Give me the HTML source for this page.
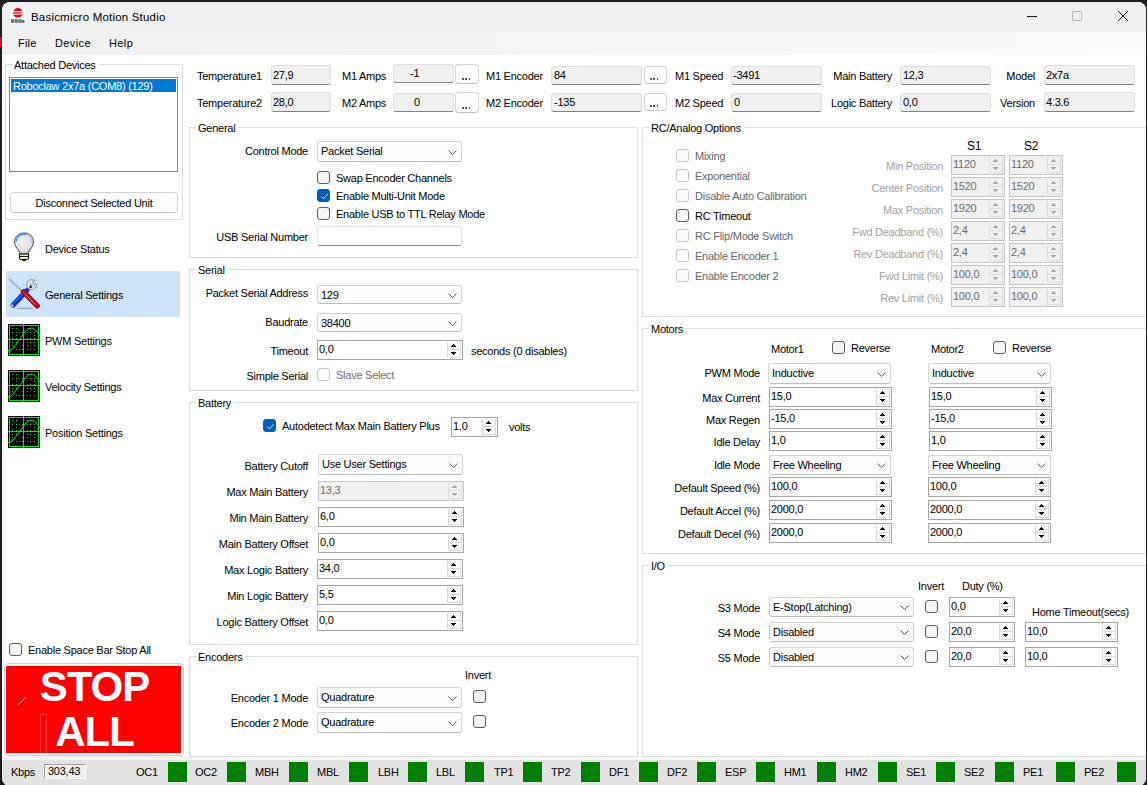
<!DOCTYPE html><html><head><meta charset="utf-8"><style>
*{margin:0;padding:0}
html,body{width:1147px;height:785px;overflow:hidden;background:#1e1f22}
body{position:relative;font-family:"Liberation Sans",sans-serif;font-size:11px;color:#000}
.t{position:absolute;font-size:11px;line-height:13px;letter-spacing:-0.25px;white-space:nowrap}
.ro{position:absolute;box-sizing:border-box;background:#f0f0f0;border:1px solid #dedede;border-bottom:1px solid #848484;border-radius:3px}
.btn{position:absolute;box-sizing:border-box;background:#fdfdfd;border:1px solid #d4d4d4;border-bottom-color:#c2c2c2;border-radius:4px}
.dots{position:absolute;width:9px;height:2px;background:repeating-linear-gradient(90deg,#555 0 1.6px,transparent 1.6px 3.4px)}
.cb{position:absolute;box-sizing:border-box;background:#fdfdfd;border:1px solid #d3d3d3;border-bottom-color:#bcbcbc;border-radius:3px}
.num{position:absolute;box-sizing:border-box;background:#fff;border:1px solid #a4a6ab}
.num.dis{background:#f0f0f0;border-color:#c4c4c4}
.sp{position:absolute;width:14px;box-sizing:border-box;border:1px solid #d9d9d9;border-top:none;background:#fbfbfb}
.num.dis .sp{background:#f0f0f0;border-color:#dedede}
.ck{position:absolute;width:13px;height:13px;box-sizing:border-box;border:1px solid #5d5d5d;border-radius:3px;background:#f4f4f4}
.ck.on{background:#005fb8;border-color:#005fb8}
.ck.dis{border-color:#c6c6c6;background:#fbfbfb}
.gb{position:absolute;box-sizing:border-box;border:1px solid #dcdcdc}
</style></head><body><div id="win" style="position:absolute;left:2px;top:2px;width:1144px;height:784px;background:#fff;border-radius:8px;overflow:hidden"></div>
<div style="position:absolute;left:2px;top:2px;width:1144px;height:30px;box-sizing:border-box;background:#eff0f2;border-radius:8px 8px 0 0"></div>
<div style="position:absolute;left:2px;top:32px;width:1144px;height:23px;box-sizing:border-box;background:linear-gradient(90deg,#f0f0f0,#fbfbfb)"></div>
<svg style="position:absolute;left:10px;top:8px" width="16" height="16" viewBox="0 0 16 16"><rect width="16" height="16" fill="#fff"/><circle cx="7.9" cy="4.9" r="4.9" fill="#dc0a1e"/><path d="M3 3.1 H11 A1.2 1.2 0 0 1 11 6.8 H3 V5.7 H10.6 A0.4 0.4 0 0 0 10.6 4.2 H3Z" fill="#fff" opacity="0.85"/><rect x="3" y="4.2" width="7.5" height="1.5" fill="#e06070"/><path d="M1 11.2h3.2v3.6H1zM4.8 11.2h3v3.6h-3zM8.4 11.2h3.2v3.6H8.4zM12 12.2h2.5v2.6H12z" fill="#555"/><path d="M1.6 12.5h2M5.3 12.5h2M8.9 12.5h2M1.6 13.8h2M5.3 13.8h2M8.9 13.8h2" stroke="#bbb" stroke-width="0.4"/></svg>
<div class="t " style="top:11px;left:31px;font-size:11.5px;letter-spacing:0.2px">Basicmicro Motion Studio</div>
<div style="position:absolute;left:1027px;top:16px;width:10px;height:1px;box-sizing:border-box;background:#111"></div>
<div style="position:absolute;left:1072px;top:11px;width:10px;height:10px;box-sizing:border-box;border:1px solid #b5b5b5;border-radius:1px"></div>
<svg style="position:absolute;left:1117px;top:10px" width="12" height="12" viewBox="0 0 12 12"><path d="M1 1 L11 11 M11 1 L1 11" stroke="#111" stroke-width="1"/></svg>
<div class="t " style="top:37px;left:18px;letter-spacing:0.2px">File</div>
<div class="t " style="top:37px;left:55px;letter-spacing:0.4px">Device</div>
<div class="t " style="top:37px;left:109px;letter-spacing:0.4px">Help</div>
<div class="gb" style="left:5px;top:64px;width:178px;height:156px"></div>
<div class="t " style="top:59px;left:12px;background:#fff;padding:0 3px 0 2px">Attached Devices</div>
<div style="position:absolute;left:9px;top:77px;width:169px;height:95px;box-sizing:border-box;border:1px solid #82858c;background:#fff"></div>
<div style="position:absolute;left:11px;top:79px;width:165px;height:13px;box-sizing:border-box;background:#0078d7"></div>
<div class="t " style="top:80px;color:#fff;left:13px;">Roboclaw 2x7a (COM8) (129)</div>
<div class="btn" style="left:10px;top:192px;width:168px;height:21px"></div>
<div class="t " style="top:197px;left:-106px;width:400px;text-align:center;">Disconnect Selected Unit</div>
<div style="position:absolute;left:6px;top:271px;width:174px;height:46px;box-sizing:border-box;background:#cde4f8"></div>
<div class="t " style="top:243px;left:45px;">Device Status</div>
<div class="t " style="top:289px;left:45px;">General Settings</div>
<div class="t " style="top:335px;left:45px;">PWM Settings</div>
<div class="t " style="top:381px;left:45px;">Velocity Settings</div>
<div class="t " style="top:427px;left:45px;">Position Settings</div>
<svg style="position:absolute;left:8px;top:228px" width="32" height="40" viewBox="0 0 32 40">
<defs><radialGradient id="bg1" cx="0.45" cy="0.45" r="0.6"><stop offset="0" stop-color="#f0f0f0"/><stop offset="0.65" stop-color="#e2e2e2"/><stop offset="1" stop-color="#b0d4f4"/></radialGradient></defs>
<path d="M16 5 C10 5 6.5 9 6.5 14 C6.5 18 9 20 11 23 L11.5 26 L20.5 26 L21 23 C23 20 25.5 18 25.5 14 C25.5 9 22 5 16 5Z" fill="url(#bg1)" stroke="#3a3a3a" stroke-width="0.9"/>
<path d="M8.3 13.5 C8.8 9.5 11.5 7 14 6.6 L18.5 6.6" stroke="#2a9be0" stroke-width="1.3" fill="none" opacity="0.9"/><path d="M21 8 C23.5 9.5 24.5 12 24.3 14" stroke="#a8c8f0" stroke-width="1.2" fill="none"/>
<rect x="11.5" y="26" width="9" height="5.5" rx="1" fill="#f4f0c0" stroke="#000" stroke-width="1"/>
<path d="M11.5 28.5 H20.5" stroke="#000" stroke-width="0.9"/>
<path d="M13 31.5 Q16 35 19 31.5" fill="#000"/>
</svg>
<svg style="position:absolute;left:5px;top:274px" width="40" height="40" viewBox="0 0 40 40">
<ellipse cx="20" cy="34.3" rx="9.5" ry="0.9" fill="#7d8fa0" opacity="0.6"/>
<path d="M4.3 4.6 L17 17" stroke="#9aa2aa" stroke-width="2"/>
<path d="M4.6 4.4 L16.5 16.3" stroke="#dde2e6" stroke-width="0.8"/>
<path d="M8 31.2 L21.5 16.8" stroke="#0b2fd6" stroke-width="5" stroke-linecap="round"/>
<path d="M8.5 29.6 L20.5 16.6" stroke="#12b0f0" stroke-width="0.9"/>
<circle cx="7.3" cy="31.7" r="1.1" fill="#fff"/>
<path d="M21 17.5 L26 12.5" stroke="#0b2fe0" stroke-width="3.4"/>
<path d="M26.5 5.5 A5.2 5.2 0 1 0 31.8 10.2 L28.6 10.3 L27.8 7.5 L30.6 6.2 Z" fill="#d6dade" stroke="#7e868e" stroke-width="0.7"/>
<path d="M24.2 13.4 L26.2 10.2 L26.8 13.9Z" fill="#000"/>
<path d="M18.5 17.8 L32.3 31.8" stroke="#a8102a" stroke-width="5.4" stroke-linecap="round"/>
<path d="M19.5 19.5 L31 31" stroke="#f4bcd0" stroke-width="0.8"/>
<path d="M17.6 17.4 L20.3 20.1" stroke="#e01860" stroke-width="1.2"/>
</svg>
<svg style="position:absolute;left:8px;top:324px" width="32" height="32" viewBox="0 0 32 32" shape-rendering="crispEdges">
<rect width="32" height="32" fill="#000"/>
<rect x="1.5" y="1.5" width="29" height="29" fill="none" stroke="#00ee00" stroke-width="1"/>
<rect x="15" y="0" width="1" height="32" fill="#00ee00"/>
<rect x="0" y="15" width="32" height="1" fill="#00ee00"/>
<rect x="4" y="4" width="1" height="1" fill="#00e000"/><rect x="8" y="4" width="1" height="1" fill="#00e000"/><rect x="19" y="4" width="1" height="1" fill="#00e000"/><rect x="22" y="4" width="1" height="1" fill="#00e000"/><rect x="4" y="8" width="1" height="1" fill="#00e000"/><rect x="8" y="8" width="1" height="1" fill="#00e000"/><rect x="11" y="8" width="1" height="1" fill="#00e000"/><rect x="14" y="8" width="1" height="1" fill="#00e000"/><rect x="19" y="8" width="1" height="1" fill="#00e000"/><rect x="22" y="8" width="1" height="1" fill="#00e000"/><rect x="26" y="8" width="1" height="1" fill="#00e000"/><rect x="8" y="11" width="1" height="1" fill="#00e000"/><rect x="26" y="11" width="1" height="1" fill="#00e000"/><rect x="4" y="14" width="1" height="1" fill="#00e000"/><rect x="8" y="14" width="1" height="1" fill="#00e000"/><rect x="19" y="14" width="1" height="1" fill="#00e000"/><rect x="22" y="14" width="1" height="1" fill="#00e000"/><rect x="26" y="14" width="1" height="1" fill="#00e000"/><rect x="4" y="18" width="1" height="1" fill="#00e000"/><rect x="8" y="18" width="1" height="1" fill="#00e000"/><rect x="19" y="18" width="1" height="1" fill="#00e000"/><rect x="22" y="18" width="1" height="1" fill="#00e000"/><rect x="26" y="18" width="1" height="1" fill="#00e000"/><rect x="4" y="21" width="1" height="1" fill="#00e000"/><rect x="14" y="21" width="1" height="1" fill="#00e000"/><rect x="19" y="21" width="1" height="1" fill="#00e000"/><rect x="26" y="21" width="1" height="1" fill="#00e000"/><rect x="8" y="25" width="1" height="1" fill="#00e000"/><rect x="11" y="25" width="1" height="1" fill="#00e000"/><rect x="14" y="25" width="1" height="1" fill="#00e000"/><rect x="19" y="25" width="1" height="1" fill="#00e000"/><rect x="22" y="25" width="1" height="1" fill="#00e000"/><rect x="26" y="25" width="1" height="1" fill="#00e000"/>
<path d="M0 26.5 L3 26 L6 23 L10 18 L14 12 L17 8 L21 4.5 L24 4 L27 5.5 L30 9 L32 12" fill="none" stroke="#00ee00" stroke-width="1" shape-rendering="auto"/>
</svg>
<svg style="position:absolute;left:8px;top:370px" width="32" height="32" viewBox="0 0 32 32" shape-rendering="crispEdges">
<rect width="32" height="32" fill="#000"/>
<rect x="1.5" y="1.5" width="29" height="29" fill="none" stroke="#00ee00" stroke-width="1"/>
<rect x="15" y="0" width="1" height="32" fill="#00ee00"/>
<rect x="0" y="15" width="32" height="1" fill="#00ee00"/>
<rect x="4" y="4" width="1" height="1" fill="#00e000"/><rect x="8" y="4" width="1" height="1" fill="#00e000"/><rect x="19" y="4" width="1" height="1" fill="#00e000"/><rect x="22" y="4" width="1" height="1" fill="#00e000"/><rect x="4" y="8" width="1" height="1" fill="#00e000"/><rect x="8" y="8" width="1" height="1" fill="#00e000"/><rect x="11" y="8" width="1" height="1" fill="#00e000"/><rect x="14" y="8" width="1" height="1" fill="#00e000"/><rect x="19" y="8" width="1" height="1" fill="#00e000"/><rect x="22" y="8" width="1" height="1" fill="#00e000"/><rect x="26" y="8" width="1" height="1" fill="#00e000"/><rect x="8" y="11" width="1" height="1" fill="#00e000"/><rect x="26" y="11" width="1" height="1" fill="#00e000"/><rect x="4" y="14" width="1" height="1" fill="#00e000"/><rect x="8" y="14" width="1" height="1" fill="#00e000"/><rect x="19" y="14" width="1" height="1" fill="#00e000"/><rect x="22" y="14" width="1" height="1" fill="#00e000"/><rect x="26" y="14" width="1" height="1" fill="#00e000"/><rect x="4" y="18" width="1" height="1" fill="#00e000"/><rect x="8" y="18" width="1" height="1" fill="#00e000"/><rect x="19" y="18" width="1" height="1" fill="#00e000"/><rect x="22" y="18" width="1" height="1" fill="#00e000"/><rect x="26" y="18" width="1" height="1" fill="#00e000"/><rect x="4" y="21" width="1" height="1" fill="#00e000"/><rect x="14" y="21" width="1" height="1" fill="#00e000"/><rect x="19" y="21" width="1" height="1" fill="#00e000"/><rect x="26" y="21" width="1" height="1" fill="#00e000"/><rect x="8" y="25" width="1" height="1" fill="#00e000"/><rect x="11" y="25" width="1" height="1" fill="#00e000"/><rect x="14" y="25" width="1" height="1" fill="#00e000"/><rect x="19" y="25" width="1" height="1" fill="#00e000"/><rect x="22" y="25" width="1" height="1" fill="#00e000"/><rect x="26" y="25" width="1" height="1" fill="#00e000"/>
<path d="M0 26.5 L3 26 L6 23 L10 18 L14 12 L17 8 L21 4.5 L24 4 L27 5.5 L30 9 L32 12" fill="none" stroke="#00ee00" stroke-width="1" shape-rendering="auto"/>
</svg>
<svg style="position:absolute;left:8px;top:416px" width="32" height="32" viewBox="0 0 32 32" shape-rendering="crispEdges">
<rect width="32" height="32" fill="#000"/>
<rect x="1.5" y="1.5" width="29" height="29" fill="none" stroke="#00ee00" stroke-width="1"/>
<rect x="15" y="0" width="1" height="32" fill="#00ee00"/>
<rect x="0" y="15" width="32" height="1" fill="#00ee00"/>
<rect x="4" y="4" width="1" height="1" fill="#00e000"/><rect x="8" y="4" width="1" height="1" fill="#00e000"/><rect x="19" y="4" width="1" height="1" fill="#00e000"/><rect x="22" y="4" width="1" height="1" fill="#00e000"/><rect x="4" y="8" width="1" height="1" fill="#00e000"/><rect x="8" y="8" width="1" height="1" fill="#00e000"/><rect x="11" y="8" width="1" height="1" fill="#00e000"/><rect x="14" y="8" width="1" height="1" fill="#00e000"/><rect x="19" y="8" width="1" height="1" fill="#00e000"/><rect x="22" y="8" width="1" height="1" fill="#00e000"/><rect x="26" y="8" width="1" height="1" fill="#00e000"/><rect x="8" y="11" width="1" height="1" fill="#00e000"/><rect x="26" y="11" width="1" height="1" fill="#00e000"/><rect x="4" y="14" width="1" height="1" fill="#00e000"/><rect x="8" y="14" width="1" height="1" fill="#00e000"/><rect x="19" y="14" width="1" height="1" fill="#00e000"/><rect x="22" y="14" width="1" height="1" fill="#00e000"/><rect x="26" y="14" width="1" height="1" fill="#00e000"/><rect x="4" y="18" width="1" height="1" fill="#00e000"/><rect x="8" y="18" width="1" height="1" fill="#00e000"/><rect x="19" y="18" width="1" height="1" fill="#00e000"/><rect x="22" y="18" width="1" height="1" fill="#00e000"/><rect x="26" y="18" width="1" height="1" fill="#00e000"/><rect x="4" y="21" width="1" height="1" fill="#00e000"/><rect x="14" y="21" width="1" height="1" fill="#00e000"/><rect x="19" y="21" width="1" height="1" fill="#00e000"/><rect x="26" y="21" width="1" height="1" fill="#00e000"/><rect x="8" y="25" width="1" height="1" fill="#00e000"/><rect x="11" y="25" width="1" height="1" fill="#00e000"/><rect x="14" y="25" width="1" height="1" fill="#00e000"/><rect x="19" y="25" width="1" height="1" fill="#00e000"/><rect x="22" y="25" width="1" height="1" fill="#00e000"/><rect x="26" y="25" width="1" height="1" fill="#00e000"/>
<path d="M0 26.5 L3 26 L6 23 L10 18 L14 12 L17 8 L21 4.5 L24 4 L27 5.5 L30 9 L32 12" fill="none" stroke="#00ee00" stroke-width="1" shape-rendering="auto"/>
</svg>
<div class="ck" style="left:9px;top:643px"></div>
<div class="t " style="top:644px;left:28px;">Enable Space Bar Stop All</div>
<div style="position:absolute;left:4px;top:663px;width:180px;height:93px;box-sizing:border-box;border:1px solid #cfcfcf;border-radius:4px;background:#fff"></div>
<div style="position:absolute;left:6px;top:666px;width:175px;height:87px;box-sizing:border-box;background:#ff0000"></div>
<svg style="position:absolute;left:17px;top:696px" width="10" height="10" viewBox="0 0 10 10"><path d="M1.2 8.8 L8.8 1.2" stroke="#fff" stroke-width="0.8" opacity="0.85"/></svg>
<div style="position:absolute;left:40px;top:714px;width:7px;height:39px;box-sizing:border-box;border:1px solid #ff3c3c;border-bottom:none"></div>
<div style="position:absolute;left:7px;top:664px;width:175px;text-align:center;color:#fff;font-family:'Liberation Sans';font-weight:bold;font-size:42px;line-height:45px;letter-spacing:-1px">STOP<br>ALL</div>
<div class="t " style="top:70px;left:197px;">Temperature1</div>
<div class="t " style="top:97px;left:197px;">Temperature2</div>
<div class="ro" style="left:271px;top:65px;width:60px;height:20px"></div>
<div class="t " style="top:69px;left:273px;">27,9</div>
<div class="ro" style="left:271px;top:92px;width:60px;height:20px"></div>
<div class="t " style="top:96px;left:273px;">28,0</div>
<div class="t " style="top:70px;left:342px;">M1 Amps</div>
<div class="t " style="top:97px;left:342px;">M2 Amps</div>
<div class="ro" style="left:393px;top:64px;width:61px;height:19px"></div>
<div class="t " style="top:67px;left:410px;">-1</div>
<div class="ro" style="left:393px;top:93px;width:61px;height:19px"></div>
<div class="t " style="top:96px;left:414px;">0</div>
<div class="btn" style="left:455px;top:64px;width:24px;height:20px"><span class="dots" style="left:6px;top:13px"></span></div>
<div class="btn" style="left:455px;top:92px;width:24px;height:21px"><span class="dots" style="left:6px;top:14px"></span></div>
<div class="t " style="top:70px;left:486px;">M1 Encoder</div>
<div class="t " style="top:97px;left:486px;">M2 Encoder</div>
<div class="ro" style="left:551px;top:66px;width:91px;height:19px"></div>
<div class="t " style="top:69px;left:554px;">84</div>
<div class="ro" style="left:551px;top:93px;width:91px;height:19px"></div>
<div class="t " style="top:96px;left:554px;">-135</div>
<div class="btn" style="left:644px;top:66px;width:23px;height:18px"><span class="dots" style="left:5px;top:11px"></span></div>
<div class="btn" style="left:644px;top:93px;width:23px;height:18px"><span class="dots" style="left:5px;top:11px"></span></div>
<div class="t " style="top:70px;left:675px;">M1 Speed</div>
<div class="t " style="top:97px;left:675px;">M2 Speed</div>
<div class="ro" style="left:731px;top:66px;width:91px;height:19px"></div>
<div class="t " style="top:69px;left:733px;">-3491</div>
<div class="ro" style="left:731px;top:93px;width:91px;height:19px"></div>
<div class="t " style="top:96px;left:734px;">0</div>
<div class="t " style="top:70px;left:492px;width:400px;text-align:right;">Main Battery</div>
<div class="t " style="top:97px;left:492px;width:400px;text-align:right;">Logic Battery</div>
<div class="ro" style="left:900px;top:66px;width:91px;height:19px"></div>
<div class="t " style="top:69px;left:903px;">12,3</div>
<div class="ro" style="left:900px;top:93px;width:91px;height:19px"></div>
<div class="t " style="top:96px;left:903px;">0,0</div>
<div class="t " style="top:70px;left:635px;width:400px;text-align:right;">Model</div>
<div class="t " style="top:97px;left:635px;width:400px;text-align:right;">Version</div>
<div class="ro" style="left:1044px;top:65px;width:91px;height:20px"></div>
<div class="t " style="top:69px;left:1046px;">2x7a</div>
<div class="ro" style="left:1044px;top:92px;width:91px;height:20px"></div>
<div class="t " style="top:96px;left:1046px;">4.3.6</div>
<div class="gb" style="left:189px;top:127px;width:449px;height:131px"></div>
<div class="t " style="top:122px;left:196px;background:#fff;padding:0 3px 0 2px">General</div>
<div class="t " style="top:145px;left:-92px;width:400px;text-align:right;">Control Mode</div>
<div class="cb" style="left:317px;top:141px;width:145px;height:21px"><svg width="9" height="5" viewBox="0 0 9 5" style="position:absolute;right:4px;top:8px"><path d="M0.5 0.5 L4.5 4.5 L8.5 0.5" fill="none" stroke="#5a5a5a" stroke-width="1"/></svg></div>
<div class="t " style="top:145px;left:321px;">Packet Serial</div>
<div class="ck" style="left:317px;top:171px"></div>
<div class="t " style="top:172px;left:336px;">Swap Encoder Channels</div>
<div class="ck on" style="left:317px;top:189px"><svg width="13" height="13" viewBox="0 0 13 13" style="position:absolute;left:0;top:0"><path d="M3.2 6.6 L5.4 8.8 L9.8 4.2" fill="none" stroke="#fff" stroke-width="0.9" opacity="0.9"/></svg></div>
<div class="t " style="top:190px;left:336px;">Enable Multi-Unit Mode</div>
<div class="ck" style="left:317px;top:207px"></div>
<div class="t " style="top:208px;left:336px;">Enable USB to TTL Relay Mode</div>
<div class="t " style="top:231px;left:-92px;width:400px;text-align:right;">USB Serial Number</div>
<div style="position:absolute;left:317px;top:226px;width:145px;height:20px;box-sizing:border-box;background:#fff;border:1px solid #e0e0e0;border-bottom-color:#8a8a8a;border-radius:3px"></div>
<div class="gb" style="left:189px;top:269px;width:449px;height:122px"></div>
<div class="t " style="top:264px;left:196px;background:#fff;padding:0 3px 0 2px">Serial</div>
<div class="t " style="top:287px;left:-92px;width:400px;text-align:right;">Packet Serial Address</div>
<div class="cb" style="left:317px;top:285px;width:145px;height:19px"><svg width="9" height="5" viewBox="0 0 9 5" style="position:absolute;right:4px;top:7px"><path d="M0.5 0.5 L4.5 4.5 L8.5 0.5" fill="none" stroke="#5a5a5a" stroke-width="1"/></svg></div>
<div class="t " style="top:289px;left:321px;">129</div>
<div class="t " style="top:316px;left:-92px;width:400px;text-align:right;">Baudrate</div>
<div class="cb" style="left:317px;top:313px;width:145px;height:19px"><svg width="9" height="5" viewBox="0 0 9 5" style="position:absolute;right:4px;top:7px"><path d="M0.5 0.5 L4.5 4.5 L8.5 0.5" fill="none" stroke="#5a5a5a" stroke-width="1"/></svg></div>
<div class="t " style="top:317px;left:321px;">38400</div>
<div class="t " style="top:345px;left:-92px;width:400px;text-align:right;">Timeout</div>
<div class="num" style="left:317px;top:340px;width:146px;height:20px"><div class="sp" style="left:129px;top:1px;height:8px"><svg width="5" height="3" viewBox="0 0 5 3" shape-rendering="crispEdges" style="position:absolute;left:3px;top:2px"><path d="M2 0h1v1h-1zM1 1h3v1h-3zM0 2h5v1h-5z" fill="#000"/></svg></div><div class="sp" style="left:129px;top:9px;height:8px"><svg width="5" height="3" viewBox="0 0 5 3" shape-rendering="crispEdges" style="position:absolute;left:3px;top:2px"><path d="M0 0h5v1h-5zM1 1h3v1h-3zM2 2h1v1h-1z" fill="#000"/></svg></div></div>
<div class="t " style="top:343px;left:319px;">0,0</div>
<div class="t " style="top:345px;left:471px;">seconds (0 disables)</div>
<div class="t " style="top:370px;left:-92px;width:400px;text-align:right;">Simple Serial</div>
<div class="ck dis" style="left:317px;top:368px"></div>
<div class="t " style="top:369px;color:#6d6d6d;left:336px;">Slave Select</div>
<div class="gb" style="left:189px;top:402px;width:449px;height:243px"></div>
<div class="t " style="top:397px;left:196px;background:#fff;padding:0 3px 0 2px">Battery</div>
<div class="ck on" style="left:263px;top:419px"><svg width="13" height="13" viewBox="0 0 13 13" style="position:absolute;left:0;top:0"><path d="M3.2 6.6 L5.4 8.8 L9.8 4.2" fill="none" stroke="#fff" stroke-width="0.9" opacity="0.9"/></svg></div>
<div class="t " style="top:420px;left:282px;">Autodetect Max Main Battery Plus</div>
<div class="num" style="left:451px;top:417px;width:47px;height:20px"><div class="sp" style="left:30px;top:1px;height:8px"><svg width="5" height="3" viewBox="0 0 5 3" shape-rendering="crispEdges" style="position:absolute;left:3px;top:2px"><path d="M2 0h1v1h-1zM1 1h3v1h-3zM0 2h5v1h-5z" fill="#000"/></svg></div><div class="sp" style="left:30px;top:9px;height:8px"><svg width="5" height="3" viewBox="0 0 5 3" shape-rendering="crispEdges" style="position:absolute;left:3px;top:2px"><path d="M0 0h5v1h-5zM1 1h3v1h-3zM2 2h1v1h-1z" fill="#000"/></svg></div></div>
<div class="t " style="top:420px;left:453px;">1,0</div>
<div class="t " style="top:421px;left:509px;">volts</div>
<div class="t " style="top:460px;left:-92px;width:400px;text-align:right;">Battery Cutoff</div>
<div class="cb" style="left:318px;top:454px;width:145px;height:21px"><svg width="9" height="5" viewBox="0 0 9 5" style="position:absolute;right:4px;top:8px"><path d="M0.5 0.5 L4.5 4.5 L8.5 0.5" fill="none" stroke="#5a5a5a" stroke-width="1"/></svg></div>
<div class="t " style="top:458px;left:322px;">Use User Settings</div>
<div class="t " style="top:486px;left:-92px;width:400px;text-align:right;">Max Main Battery</div>
<div class="num dis" style="left:318px;top:481px;width:146px;height:20px"><div class="sp" style="left:129px;top:1px;height:8px"><svg width="5" height="3" viewBox="0 0 5 3" shape-rendering="crispEdges" style="position:absolute;left:3px;top:2px"><path d="M2 0h1v1h-1zM1 1h3v1h-3zM0 2h5v1h-5z" fill="#a8a8a8"/></svg></div><div class="sp" style="left:129px;top:9px;height:8px"><svg width="5" height="3" viewBox="0 0 5 3" shape-rendering="crispEdges" style="position:absolute;left:3px;top:2px"><path d="M0 0h5v1h-5zM1 1h3v1h-3zM2 2h1v1h-1z" fill="#a8a8a8"/></svg></div></div>
<div class="t " style="top:484px;color:#6d6d6d;left:320px;">13,3</div>
<div class="t " style="top:512px;left:-92px;width:400px;text-align:right;">Min Main Battery</div>
<div class="num" style="left:318px;top:507px;width:146px;height:20px"><div class="sp" style="left:129px;top:1px;height:8px"><svg width="5" height="3" viewBox="0 0 5 3" shape-rendering="crispEdges" style="position:absolute;left:3px;top:2px"><path d="M2 0h1v1h-1zM1 1h3v1h-3zM0 2h5v1h-5z" fill="#000"/></svg></div><div class="sp" style="left:129px;top:9px;height:8px"><svg width="5" height="3" viewBox="0 0 5 3" shape-rendering="crispEdges" style="position:absolute;left:3px;top:2px"><path d="M0 0h5v1h-5zM1 1h3v1h-3zM2 2h1v1h-1z" fill="#000"/></svg></div></div>
<div class="t " style="top:510px;left:320px;">6,0</div>
<div class="t " style="top:538px;left:-92px;width:400px;text-align:right;">Main Battery Offset</div>
<div class="num" style="left:318px;top:533px;width:146px;height:20px"><div class="sp" style="left:129px;top:1px;height:8px"><svg width="5" height="3" viewBox="0 0 5 3" shape-rendering="crispEdges" style="position:absolute;left:3px;top:2px"><path d="M2 0h1v1h-1zM1 1h3v1h-3zM0 2h5v1h-5z" fill="#000"/></svg></div><div class="sp" style="left:129px;top:9px;height:8px"><svg width="5" height="3" viewBox="0 0 5 3" shape-rendering="crispEdges" style="position:absolute;left:3px;top:2px"><path d="M0 0h5v1h-5zM1 1h3v1h-3zM2 2h1v1h-1z" fill="#000"/></svg></div></div>
<div class="t " style="top:536px;left:320px;">0,0</div>
<div class="t " style="top:564px;left:-92px;width:400px;text-align:right;">Max Logic Battery</div>
<div class="num" style="left:317px;top:559px;width:146px;height:20px"><div class="sp" style="left:129px;top:1px;height:8px"><svg width="5" height="3" viewBox="0 0 5 3" shape-rendering="crispEdges" style="position:absolute;left:3px;top:2px"><path d="M2 0h1v1h-1zM1 1h3v1h-3zM0 2h5v1h-5z" fill="#000"/></svg></div><div class="sp" style="left:129px;top:9px;height:8px"><svg width="5" height="3" viewBox="0 0 5 3" shape-rendering="crispEdges" style="position:absolute;left:3px;top:2px"><path d="M0 0h5v1h-5zM1 1h3v1h-3zM2 2h1v1h-1z" fill="#000"/></svg></div></div>
<div class="t " style="top:562px;left:319px;">34,0</div>
<div class="t " style="top:590px;left:-92px;width:400px;text-align:right;">Min Logic Battery</div>
<div class="num" style="left:317px;top:585px;width:146px;height:20px"><div class="sp" style="left:129px;top:1px;height:8px"><svg width="5" height="3" viewBox="0 0 5 3" shape-rendering="crispEdges" style="position:absolute;left:3px;top:2px"><path d="M2 0h1v1h-1zM1 1h3v1h-3zM0 2h5v1h-5z" fill="#000"/></svg></div><div class="sp" style="left:129px;top:9px;height:8px"><svg width="5" height="3" viewBox="0 0 5 3" shape-rendering="crispEdges" style="position:absolute;left:3px;top:2px"><path d="M0 0h5v1h-5zM1 1h3v1h-3zM2 2h1v1h-1z" fill="#000"/></svg></div></div>
<div class="t " style="top:588px;left:319px;">5,5</div>
<div class="t " style="top:616px;left:-92px;width:400px;text-align:right;">Logic Battery Offset</div>
<div class="num" style="left:317px;top:611px;width:146px;height:20px"><div class="sp" style="left:129px;top:1px;height:8px"><svg width="5" height="3" viewBox="0 0 5 3" shape-rendering="crispEdges" style="position:absolute;left:3px;top:2px"><path d="M2 0h1v1h-1zM1 1h3v1h-3zM0 2h5v1h-5z" fill="#000"/></svg></div><div class="sp" style="left:129px;top:9px;height:8px"><svg width="5" height="3" viewBox="0 0 5 3" shape-rendering="crispEdges" style="position:absolute;left:3px;top:2px"><path d="M0 0h5v1h-5zM1 1h3v1h-3zM2 2h1v1h-1z" fill="#000"/></svg></div></div>
<div class="t " style="top:614px;left:319px;">0,0</div>
<div class="gb" style="left:189px;top:656px;width:449px;height:101px"></div>
<div class="t " style="top:651px;left:196px;background:#fff;padding:0 3px 0 2px">Encoders</div>
<div class="t " style="top:669px;left:465px;">Invert</div>
<div class="t " style="top:692px;left:-92px;width:400px;text-align:right;">Encoder 1 Mode</div>
<div class="cb" style="left:317px;top:687px;width:145px;height:21px"><svg width="9" height="5" viewBox="0 0 9 5" style="position:absolute;right:4px;top:8px"><path d="M0.5 0.5 L4.5 4.5 L8.5 0.5" fill="none" stroke="#5a5a5a" stroke-width="1"/></svg></div>
<div class="t " style="top:691px;left:321px;">Quadrature</div>
<div class="ck" style="left:473px;top:690px"></div>
<div class="t " style="top:717px;left:-92px;width:400px;text-align:right;">Encoder 2 Mode</div>
<div class="cb" style="left:317px;top:712px;width:145px;height:21px"><svg width="9" height="5" viewBox="0 0 9 5" style="position:absolute;right:4px;top:8px"><path d="M0.5 0.5 L4.5 4.5 L8.5 0.5" fill="none" stroke="#5a5a5a" stroke-width="1"/></svg></div>
<div class="t " style="top:716px;left:321px;">Quadrature</div>
<div class="ck" style="left:473px;top:715px"></div>
<div class="gb" style="left:642px;top:127px;width:519px;height:190px"></div>
<div class="t " style="top:122px;left:649px;background:#fff;padding:0 3px 0 2px">RC/Analog Options</div>
<div class="ck dis" style="left:676px;top:149px"></div>
<div class="t " style="top:150px;color:#666666;left:695px;">Mixing</div>
<div class="ck dis" style="left:676px;top:169px"></div>
<div class="t " style="top:170px;color:#666666;left:695px;">Exponential</div>
<div class="ck dis" style="left:676px;top:189px"></div>
<div class="t " style="top:190px;color:#666666;left:695px;">Disable Auto Calibration</div>
<div class="ck" style="left:676px;top:209px"></div>
<div class="t " style="top:210px;left:695px;">RC Timeout</div>
<div class="ck dis" style="left:676px;top:229px"></div>
<div class="t " style="top:230px;color:#666666;left:695px;">RC Flip/Mode Switch</div>
<div class="ck dis" style="left:676px;top:249px"></div>
<div class="t " style="top:250px;color:#666666;left:695px;">Enable Encoder 1</div>
<div class="ck dis" style="left:676px;top:269px"></div>
<div class="t " style="top:270px;color:#666666;left:695px;">Enable Encoder 2</div>
<div class="t " style="top:140px;left:774px;width:400px;text-align:center;font-size:12px">S1</div>
<div class="t " style="top:140px;left:831px;width:400px;text-align:center;font-size:12px">S2</div>
<div class="t " style="top:160px;color:#a0a0a0;left:543px;width:400px;text-align:right;">Min Position</div>
<div class="num dis" style="left:951px;top:155px;width:54px;height:20px"><div class="sp" style="left:37px;top:1px;height:8px"><svg width="5" height="3" viewBox="0 0 5 3" shape-rendering="crispEdges" style="position:absolute;left:3px;top:2px"><path d="M2 0h1v1h-1zM1 1h3v1h-3zM0 2h5v1h-5z" fill="#a8a8a8"/></svg></div><div class="sp" style="left:37px;top:9px;height:8px"><svg width="5" height="3" viewBox="0 0 5 3" shape-rendering="crispEdges" style="position:absolute;left:3px;top:2px"><path d="M0 0h5v1h-5zM1 1h3v1h-3zM2 2h1v1h-1z" fill="#a8a8a8"/></svg></div></div>
<div class="t " style="top:158px;color:#6d6d6d;left:953px;">1120</div>
<div class="num dis" style="left:1009px;top:155px;width:54px;height:20px"><div class="sp" style="left:37px;top:1px;height:8px"><svg width="5" height="3" viewBox="0 0 5 3" shape-rendering="crispEdges" style="position:absolute;left:3px;top:2px"><path d="M2 0h1v1h-1zM1 1h3v1h-3zM0 2h5v1h-5z" fill="#a8a8a8"/></svg></div><div class="sp" style="left:37px;top:9px;height:8px"><svg width="5" height="3" viewBox="0 0 5 3" shape-rendering="crispEdges" style="position:absolute;left:3px;top:2px"><path d="M0 0h5v1h-5zM1 1h3v1h-3zM2 2h1v1h-1z" fill="#a8a8a8"/></svg></div></div>
<div class="t " style="top:158px;color:#6d6d6d;left:1011px;">1120</div>
<div class="t " style="top:182px;color:#a0a0a0;left:543px;width:400px;text-align:right;">Center Position</div>
<div class="num dis" style="left:951px;top:177px;width:54px;height:20px"><div class="sp" style="left:37px;top:1px;height:8px"><svg width="5" height="3" viewBox="0 0 5 3" shape-rendering="crispEdges" style="position:absolute;left:3px;top:2px"><path d="M2 0h1v1h-1zM1 1h3v1h-3zM0 2h5v1h-5z" fill="#a8a8a8"/></svg></div><div class="sp" style="left:37px;top:9px;height:8px"><svg width="5" height="3" viewBox="0 0 5 3" shape-rendering="crispEdges" style="position:absolute;left:3px;top:2px"><path d="M0 0h5v1h-5zM1 1h3v1h-3zM2 2h1v1h-1z" fill="#a8a8a8"/></svg></div></div>
<div class="t " style="top:180px;color:#6d6d6d;left:953px;">1520</div>
<div class="num dis" style="left:1009px;top:177px;width:54px;height:20px"><div class="sp" style="left:37px;top:1px;height:8px"><svg width="5" height="3" viewBox="0 0 5 3" shape-rendering="crispEdges" style="position:absolute;left:3px;top:2px"><path d="M2 0h1v1h-1zM1 1h3v1h-3zM0 2h5v1h-5z" fill="#a8a8a8"/></svg></div><div class="sp" style="left:37px;top:9px;height:8px"><svg width="5" height="3" viewBox="0 0 5 3" shape-rendering="crispEdges" style="position:absolute;left:3px;top:2px"><path d="M0 0h5v1h-5zM1 1h3v1h-3zM2 2h1v1h-1z" fill="#a8a8a8"/></svg></div></div>
<div class="t " style="top:180px;color:#6d6d6d;left:1011px;">1520</div>
<div class="t " style="top:204px;color:#a0a0a0;left:543px;width:400px;text-align:right;">Max Position</div>
<div class="num dis" style="left:951px;top:199px;width:54px;height:20px"><div class="sp" style="left:37px;top:1px;height:8px"><svg width="5" height="3" viewBox="0 0 5 3" shape-rendering="crispEdges" style="position:absolute;left:3px;top:2px"><path d="M2 0h1v1h-1zM1 1h3v1h-3zM0 2h5v1h-5z" fill="#a8a8a8"/></svg></div><div class="sp" style="left:37px;top:9px;height:8px"><svg width="5" height="3" viewBox="0 0 5 3" shape-rendering="crispEdges" style="position:absolute;left:3px;top:2px"><path d="M0 0h5v1h-5zM1 1h3v1h-3zM2 2h1v1h-1z" fill="#a8a8a8"/></svg></div></div>
<div class="t " style="top:202px;color:#6d6d6d;left:953px;">1920</div>
<div class="num dis" style="left:1009px;top:199px;width:54px;height:20px"><div class="sp" style="left:37px;top:1px;height:8px"><svg width="5" height="3" viewBox="0 0 5 3" shape-rendering="crispEdges" style="position:absolute;left:3px;top:2px"><path d="M2 0h1v1h-1zM1 1h3v1h-3zM0 2h5v1h-5z" fill="#a8a8a8"/></svg></div><div class="sp" style="left:37px;top:9px;height:8px"><svg width="5" height="3" viewBox="0 0 5 3" shape-rendering="crispEdges" style="position:absolute;left:3px;top:2px"><path d="M0 0h5v1h-5zM1 1h3v1h-3zM2 2h1v1h-1z" fill="#a8a8a8"/></svg></div></div>
<div class="t " style="top:202px;color:#6d6d6d;left:1011px;">1920</div>
<div class="t " style="top:226px;color:#a0a0a0;left:543px;width:400px;text-align:right;">Fwd Deadband (%)</div>
<div class="num dis" style="left:951px;top:221px;width:54px;height:20px"><div class="sp" style="left:37px;top:1px;height:8px"><svg width="5" height="3" viewBox="0 0 5 3" shape-rendering="crispEdges" style="position:absolute;left:3px;top:2px"><path d="M2 0h1v1h-1zM1 1h3v1h-3zM0 2h5v1h-5z" fill="#a8a8a8"/></svg></div><div class="sp" style="left:37px;top:9px;height:8px"><svg width="5" height="3" viewBox="0 0 5 3" shape-rendering="crispEdges" style="position:absolute;left:3px;top:2px"><path d="M0 0h5v1h-5zM1 1h3v1h-3zM2 2h1v1h-1z" fill="#a8a8a8"/></svg></div></div>
<div class="t " style="top:224px;color:#6d6d6d;left:953px;">2,4</div>
<div class="num dis" style="left:1009px;top:221px;width:54px;height:20px"><div class="sp" style="left:37px;top:1px;height:8px"><svg width="5" height="3" viewBox="0 0 5 3" shape-rendering="crispEdges" style="position:absolute;left:3px;top:2px"><path d="M2 0h1v1h-1zM1 1h3v1h-3zM0 2h5v1h-5z" fill="#a8a8a8"/></svg></div><div class="sp" style="left:37px;top:9px;height:8px"><svg width="5" height="3" viewBox="0 0 5 3" shape-rendering="crispEdges" style="position:absolute;left:3px;top:2px"><path d="M0 0h5v1h-5zM1 1h3v1h-3zM2 2h1v1h-1z" fill="#a8a8a8"/></svg></div></div>
<div class="t " style="top:224px;color:#6d6d6d;left:1011px;">2,4</div>
<div class="t " style="top:248px;color:#a0a0a0;left:543px;width:400px;text-align:right;">Rev Deadband (%)</div>
<div class="num dis" style="left:951px;top:243px;width:54px;height:20px"><div class="sp" style="left:37px;top:1px;height:8px"><svg width="5" height="3" viewBox="0 0 5 3" shape-rendering="crispEdges" style="position:absolute;left:3px;top:2px"><path d="M2 0h1v1h-1zM1 1h3v1h-3zM0 2h5v1h-5z" fill="#a8a8a8"/></svg></div><div class="sp" style="left:37px;top:9px;height:8px"><svg width="5" height="3" viewBox="0 0 5 3" shape-rendering="crispEdges" style="position:absolute;left:3px;top:2px"><path d="M0 0h5v1h-5zM1 1h3v1h-3zM2 2h1v1h-1z" fill="#a8a8a8"/></svg></div></div>
<div class="t " style="top:246px;color:#6d6d6d;left:953px;">2,4</div>
<div class="num dis" style="left:1009px;top:243px;width:54px;height:20px"><div class="sp" style="left:37px;top:1px;height:8px"><svg width="5" height="3" viewBox="0 0 5 3" shape-rendering="crispEdges" style="position:absolute;left:3px;top:2px"><path d="M2 0h1v1h-1zM1 1h3v1h-3zM0 2h5v1h-5z" fill="#a8a8a8"/></svg></div><div class="sp" style="left:37px;top:9px;height:8px"><svg width="5" height="3" viewBox="0 0 5 3" shape-rendering="crispEdges" style="position:absolute;left:3px;top:2px"><path d="M0 0h5v1h-5zM1 1h3v1h-3zM2 2h1v1h-1z" fill="#a8a8a8"/></svg></div></div>
<div class="t " style="top:246px;color:#6d6d6d;left:1011px;">2,4</div>
<div class="t " style="top:270px;color:#a0a0a0;left:543px;width:400px;text-align:right;">Fwd Limit (%)</div>
<div class="num dis" style="left:951px;top:265px;width:54px;height:20px"><div class="sp" style="left:37px;top:1px;height:8px"><svg width="5" height="3" viewBox="0 0 5 3" shape-rendering="crispEdges" style="position:absolute;left:3px;top:2px"><path d="M2 0h1v1h-1zM1 1h3v1h-3zM0 2h5v1h-5z" fill="#a8a8a8"/></svg></div><div class="sp" style="left:37px;top:9px;height:8px"><svg width="5" height="3" viewBox="0 0 5 3" shape-rendering="crispEdges" style="position:absolute;left:3px;top:2px"><path d="M0 0h5v1h-5zM1 1h3v1h-3zM2 2h1v1h-1z" fill="#a8a8a8"/></svg></div></div>
<div class="t " style="top:268px;color:#6d6d6d;left:953px;">100,0</div>
<div class="num dis" style="left:1009px;top:265px;width:54px;height:20px"><div class="sp" style="left:37px;top:1px;height:8px"><svg width="5" height="3" viewBox="0 0 5 3" shape-rendering="crispEdges" style="position:absolute;left:3px;top:2px"><path d="M2 0h1v1h-1zM1 1h3v1h-3zM0 2h5v1h-5z" fill="#a8a8a8"/></svg></div><div class="sp" style="left:37px;top:9px;height:8px"><svg width="5" height="3" viewBox="0 0 5 3" shape-rendering="crispEdges" style="position:absolute;left:3px;top:2px"><path d="M0 0h5v1h-5zM1 1h3v1h-3zM2 2h1v1h-1z" fill="#a8a8a8"/></svg></div></div>
<div class="t " style="top:268px;color:#6d6d6d;left:1011px;">100,0</div>
<div class="t " style="top:292px;color:#a0a0a0;left:543px;width:400px;text-align:right;">Rev Limit (%)</div>
<div class="num dis" style="left:951px;top:287px;width:54px;height:20px"><div class="sp" style="left:37px;top:1px;height:8px"><svg width="5" height="3" viewBox="0 0 5 3" shape-rendering="crispEdges" style="position:absolute;left:3px;top:2px"><path d="M2 0h1v1h-1zM1 1h3v1h-3zM0 2h5v1h-5z" fill="#a8a8a8"/></svg></div><div class="sp" style="left:37px;top:9px;height:8px"><svg width="5" height="3" viewBox="0 0 5 3" shape-rendering="crispEdges" style="position:absolute;left:3px;top:2px"><path d="M0 0h5v1h-5zM1 1h3v1h-3zM2 2h1v1h-1z" fill="#a8a8a8"/></svg></div></div>
<div class="t " style="top:290px;color:#6d6d6d;left:953px;">100,0</div>
<div class="num dis" style="left:1009px;top:287px;width:54px;height:20px"><div class="sp" style="left:37px;top:1px;height:8px"><svg width="5" height="3" viewBox="0 0 5 3" shape-rendering="crispEdges" style="position:absolute;left:3px;top:2px"><path d="M2 0h1v1h-1zM1 1h3v1h-3zM0 2h5v1h-5z" fill="#a8a8a8"/></svg></div><div class="sp" style="left:37px;top:9px;height:8px"><svg width="5" height="3" viewBox="0 0 5 3" shape-rendering="crispEdges" style="position:absolute;left:3px;top:2px"><path d="M0 0h5v1h-5zM1 1h3v1h-3zM2 2h1v1h-1z" fill="#a8a8a8"/></svg></div></div>
<div class="t " style="top:290px;color:#6d6d6d;left:1011px;">100,0</div>
<div class="gb" style="left:642px;top:328px;width:519px;height:226px"></div>
<div class="t " style="top:323px;left:649px;background:#fff;padding:0 3px 0 2px">Motors</div>
<div class="t " style="top:343px;left:771px;">Motor1</div>
<div class="ck" style="left:832px;top:341px"></div>
<div class="t " style="top:342px;left:851px;">Reverse</div>
<div class="t " style="top:343px;left:931px;">Motor2</div>
<div class="ck" style="left:993px;top:341px"></div>
<div class="t " style="top:342px;left:1012px;">Reverse</div>
<div class="t " style="top:367px;left:360px;width:400px;text-align:right;">PWM Mode</div>
<div class="cb" style="left:768px;top:363px;width:123px;height:21px"><svg width="9" height="5" viewBox="0 0 9 5" style="position:absolute;right:4px;top:8px"><path d="M0.5 0.5 L4.5 4.5 L8.5 0.5" fill="none" stroke="#5a5a5a" stroke-width="1"/></svg></div>
<div class="t " style="top:367px;left:772px;">Inductive</div>
<div class="cb" style="left:928px;top:363px;width:123px;height:21px"><svg width="9" height="5" viewBox="0 0 9 5" style="position:absolute;right:4px;top:8px"><path d="M0.5 0.5 L4.5 4.5 L8.5 0.5" fill="none" stroke="#5a5a5a" stroke-width="1"/></svg></div>
<div class="t " style="top:367px;left:932px;">Inductive</div>
<div class="t " style="top:392px;left:360px;width:400px;text-align:right;">Max Current</div>
<div class="num" style="left:769px;top:387px;width:123px;height:20px"><div class="sp" style="left:106px;top:1px;height:8px"><svg width="5" height="3" viewBox="0 0 5 3" shape-rendering="crispEdges" style="position:absolute;left:3px;top:2px"><path d="M2 0h1v1h-1zM1 1h3v1h-3zM0 2h5v1h-5z" fill="#000"/></svg></div><div class="sp" style="left:106px;top:9px;height:8px"><svg width="5" height="3" viewBox="0 0 5 3" shape-rendering="crispEdges" style="position:absolute;left:3px;top:2px"><path d="M0 0h5v1h-5zM1 1h3v1h-3zM2 2h1v1h-1z" fill="#000"/></svg></div></div>
<div class="t " style="top:390px;left:771px;">15,0</div>
<div class="num" style="left:929px;top:387px;width:123px;height:20px"><div class="sp" style="left:106px;top:1px;height:8px"><svg width="5" height="3" viewBox="0 0 5 3" shape-rendering="crispEdges" style="position:absolute;left:3px;top:2px"><path d="M2 0h1v1h-1zM1 1h3v1h-3zM0 2h5v1h-5z" fill="#000"/></svg></div><div class="sp" style="left:106px;top:9px;height:8px"><svg width="5" height="3" viewBox="0 0 5 3" shape-rendering="crispEdges" style="position:absolute;left:3px;top:2px"><path d="M0 0h5v1h-5zM1 1h3v1h-3zM2 2h1v1h-1z" fill="#000"/></svg></div></div>
<div class="t " style="top:390px;left:931px;">15,0</div>
<div class="t " style="top:414px;left:360px;width:400px;text-align:right;">Max Regen</div>
<div class="num" style="left:769px;top:409px;width:123px;height:20px"><div class="sp" style="left:106px;top:1px;height:8px"><svg width="5" height="3" viewBox="0 0 5 3" shape-rendering="crispEdges" style="position:absolute;left:3px;top:2px"><path d="M2 0h1v1h-1zM1 1h3v1h-3zM0 2h5v1h-5z" fill="#000"/></svg></div><div class="sp" style="left:106px;top:9px;height:8px"><svg width="5" height="3" viewBox="0 0 5 3" shape-rendering="crispEdges" style="position:absolute;left:3px;top:2px"><path d="M0 0h5v1h-5zM1 1h3v1h-3zM2 2h1v1h-1z" fill="#000"/></svg></div></div>
<div class="t " style="top:412px;left:771px;">-15,0</div>
<div class="num" style="left:929px;top:409px;width:123px;height:20px"><div class="sp" style="left:106px;top:1px;height:8px"><svg width="5" height="3" viewBox="0 0 5 3" shape-rendering="crispEdges" style="position:absolute;left:3px;top:2px"><path d="M2 0h1v1h-1zM1 1h3v1h-3zM0 2h5v1h-5z" fill="#000"/></svg></div><div class="sp" style="left:106px;top:9px;height:8px"><svg width="5" height="3" viewBox="0 0 5 3" shape-rendering="crispEdges" style="position:absolute;left:3px;top:2px"><path d="M0 0h5v1h-5zM1 1h3v1h-3zM2 2h1v1h-1z" fill="#000"/></svg></div></div>
<div class="t " style="top:412px;left:931px;">-15,0</div>
<div class="t " style="top:436px;left:360px;width:400px;text-align:right;">Idle Delay</div>
<div class="num" style="left:769px;top:431px;width:123px;height:20px"><div class="sp" style="left:106px;top:1px;height:8px"><svg width="5" height="3" viewBox="0 0 5 3" shape-rendering="crispEdges" style="position:absolute;left:3px;top:2px"><path d="M2 0h1v1h-1zM1 1h3v1h-3zM0 2h5v1h-5z" fill="#000"/></svg></div><div class="sp" style="left:106px;top:9px;height:8px"><svg width="5" height="3" viewBox="0 0 5 3" shape-rendering="crispEdges" style="position:absolute;left:3px;top:2px"><path d="M0 0h5v1h-5zM1 1h3v1h-3zM2 2h1v1h-1z" fill="#000"/></svg></div></div>
<div class="t " style="top:434px;left:771px;">1,0</div>
<div class="num" style="left:929px;top:431px;width:123px;height:20px"><div class="sp" style="left:106px;top:1px;height:8px"><svg width="5" height="3" viewBox="0 0 5 3" shape-rendering="crispEdges" style="position:absolute;left:3px;top:2px"><path d="M2 0h1v1h-1zM1 1h3v1h-3zM0 2h5v1h-5z" fill="#000"/></svg></div><div class="sp" style="left:106px;top:9px;height:8px"><svg width="5" height="3" viewBox="0 0 5 3" shape-rendering="crispEdges" style="position:absolute;left:3px;top:2px"><path d="M0 0h5v1h-5zM1 1h3v1h-3zM2 2h1v1h-1z" fill="#000"/></svg></div></div>
<div class="t " style="top:434px;left:931px;">1,0</div>
<div class="t " style="top:459px;left:360px;width:400px;text-align:right;">Idle Mode</div>
<div class="cb" style="left:769px;top:455px;width:122px;height:20px"><svg width="9" height="5" viewBox="0 0 9 5" style="position:absolute;right:4px;top:7px"><path d="M0.5 0.5 L4.5 4.5 L8.5 0.5" fill="none" stroke="#5a5a5a" stroke-width="1"/></svg></div>
<div class="t " style="top:459px;left:773px;">Free Wheeling</div>
<div class="cb" style="left:928px;top:455px;width:123px;height:20px"><svg width="9" height="5" viewBox="0 0 9 5" style="position:absolute;right:4px;top:7px"><path d="M0.5 0.5 L4.5 4.5 L8.5 0.5" fill="none" stroke="#5a5a5a" stroke-width="1"/></svg></div>
<div class="t " style="top:459px;left:932px;">Free Wheeling</div>
<div class="t " style="top:482px;left:360px;width:400px;text-align:right;">Default Speed (%)</div>
<div class="num" style="left:769px;top:477px;width:123px;height:20px"><div class="sp" style="left:106px;top:1px;height:8px"><svg width="5" height="3" viewBox="0 0 5 3" shape-rendering="crispEdges" style="position:absolute;left:3px;top:2px"><path d="M2 0h1v1h-1zM1 1h3v1h-3zM0 2h5v1h-5z" fill="#000"/></svg></div><div class="sp" style="left:106px;top:9px;height:8px"><svg width="5" height="3" viewBox="0 0 5 3" shape-rendering="crispEdges" style="position:absolute;left:3px;top:2px"><path d="M0 0h5v1h-5zM1 1h3v1h-3zM2 2h1v1h-1z" fill="#000"/></svg></div></div>
<div class="t " style="top:480px;left:771px;">100,0</div>
<div class="num" style="left:928px;top:477px;width:123px;height:20px"><div class="sp" style="left:106px;top:1px;height:8px"><svg width="5" height="3" viewBox="0 0 5 3" shape-rendering="crispEdges" style="position:absolute;left:3px;top:2px"><path d="M2 0h1v1h-1zM1 1h3v1h-3zM0 2h5v1h-5z" fill="#000"/></svg></div><div class="sp" style="left:106px;top:9px;height:8px"><svg width="5" height="3" viewBox="0 0 5 3" shape-rendering="crispEdges" style="position:absolute;left:3px;top:2px"><path d="M0 0h5v1h-5zM1 1h3v1h-3zM2 2h1v1h-1z" fill="#000"/></svg></div></div>
<div class="t " style="top:480px;left:930px;">100,0</div>
<div class="t " style="top:505px;left:360px;width:400px;text-align:right;">Default Accel (%)</div>
<div class="num" style="left:769px;top:500px;width:123px;height:20px"><div class="sp" style="left:106px;top:1px;height:8px"><svg width="5" height="3" viewBox="0 0 5 3" shape-rendering="crispEdges" style="position:absolute;left:3px;top:2px"><path d="M2 0h1v1h-1zM1 1h3v1h-3zM0 2h5v1h-5z" fill="#000"/></svg></div><div class="sp" style="left:106px;top:9px;height:8px"><svg width="5" height="3" viewBox="0 0 5 3" shape-rendering="crispEdges" style="position:absolute;left:3px;top:2px"><path d="M0 0h5v1h-5zM1 1h3v1h-3zM2 2h1v1h-1z" fill="#000"/></svg></div></div>
<div class="t " style="top:503px;left:771px;">2000,0</div>
<div class="num" style="left:928px;top:500px;width:123px;height:20px"><div class="sp" style="left:106px;top:1px;height:8px"><svg width="5" height="3" viewBox="0 0 5 3" shape-rendering="crispEdges" style="position:absolute;left:3px;top:2px"><path d="M2 0h1v1h-1zM1 1h3v1h-3zM0 2h5v1h-5z" fill="#000"/></svg></div><div class="sp" style="left:106px;top:9px;height:8px"><svg width="5" height="3" viewBox="0 0 5 3" shape-rendering="crispEdges" style="position:absolute;left:3px;top:2px"><path d="M0 0h5v1h-5zM1 1h3v1h-3zM2 2h1v1h-1z" fill="#000"/></svg></div></div>
<div class="t " style="top:503px;left:930px;">2000,0</div>
<div class="t " style="top:528px;left:360px;width:400px;text-align:right;">Default Decel (%)</div>
<div class="num" style="left:769px;top:523px;width:123px;height:20px"><div class="sp" style="left:106px;top:1px;height:8px"><svg width="5" height="3" viewBox="0 0 5 3" shape-rendering="crispEdges" style="position:absolute;left:3px;top:2px"><path d="M2 0h1v1h-1zM1 1h3v1h-3zM0 2h5v1h-5z" fill="#000"/></svg></div><div class="sp" style="left:106px;top:9px;height:8px"><svg width="5" height="3" viewBox="0 0 5 3" shape-rendering="crispEdges" style="position:absolute;left:3px;top:2px"><path d="M0 0h5v1h-5zM1 1h3v1h-3zM2 2h1v1h-1z" fill="#000"/></svg></div></div>
<div class="t " style="top:526px;left:771px;">2000,0</div>
<div class="num" style="left:928px;top:523px;width:123px;height:20px"><div class="sp" style="left:106px;top:1px;height:8px"><svg width="5" height="3" viewBox="0 0 5 3" shape-rendering="crispEdges" style="position:absolute;left:3px;top:2px"><path d="M2 0h1v1h-1zM1 1h3v1h-3zM0 2h5v1h-5z" fill="#000"/></svg></div><div class="sp" style="left:106px;top:9px;height:8px"><svg width="5" height="3" viewBox="0 0 5 3" shape-rendering="crispEdges" style="position:absolute;left:3px;top:2px"><path d="M0 0h5v1h-5zM1 1h3v1h-3zM2 2h1v1h-1z" fill="#000"/></svg></div></div>
<div class="t " style="top:526px;left:930px;">2000,0</div>
<div class="gb" style="left:642px;top:565px;width:519px;height:192px"></div>
<div class="t " style="top:560px;left:649px;background:#fff;padding:0 3px 0 2px">I/O</div>
<div class="t " style="top:580px;left:918px;">Invert</div>
<div class="t " style="top:580px;left:962px;">Duty (%)</div>
<div class="t " style="top:606px;left:1032px;">Home Timeout(secs)</div>
<div class="t " style="top:602px;left:360px;width:400px;text-align:right;">S3 Mode</div>
<div class="cb" style="left:769px;top:597px;width:145px;height:20px"><svg width="9" height="5" viewBox="0 0 9 5" style="position:absolute;right:4px;top:7px"><path d="M0.5 0.5 L4.5 4.5 L8.5 0.5" fill="none" stroke="#5a5a5a" stroke-width="1"/></svg></div>
<div class="t " style="top:601px;left:773px;">E-Stop(Latching)</div>
<div class="ck" style="left:925px;top:600px"></div>
<div class="num" style="left:949px;top:597px;width:66px;height:20px"><div class="sp" style="left:49px;top:1px;height:8px"><svg width="5" height="3" viewBox="0 0 5 3" shape-rendering="crispEdges" style="position:absolute;left:3px;top:2px"><path d="M2 0h1v1h-1zM1 1h3v1h-3zM0 2h5v1h-5z" fill="#000"/></svg></div><div class="sp" style="left:49px;top:9px;height:8px"><svg width="5" height="3" viewBox="0 0 5 3" shape-rendering="crispEdges" style="position:absolute;left:3px;top:2px"><path d="M0 0h5v1h-5zM1 1h3v1h-3zM2 2h1v1h-1z" fill="#000"/></svg></div></div>
<div class="t " style="top:600px;left:951px;">0,0</div>
<div class="t " style="top:627px;left:360px;width:400px;text-align:right;">S4 Mode</div>
<div class="cb" style="left:769px;top:622px;width:145px;height:20px"><svg width="9" height="5" viewBox="0 0 9 5" style="position:absolute;right:4px;top:7px"><path d="M0.5 0.5 L4.5 4.5 L8.5 0.5" fill="none" stroke="#5a5a5a" stroke-width="1"/></svg></div>
<div class="t " style="top:626px;left:773px;">Disabled</div>
<div class="ck" style="left:925px;top:625px"></div>
<div class="num" style="left:949px;top:622px;width:66px;height:20px"><div class="sp" style="left:49px;top:1px;height:8px"><svg width="5" height="3" viewBox="0 0 5 3" shape-rendering="crispEdges" style="position:absolute;left:3px;top:2px"><path d="M2 0h1v1h-1zM1 1h3v1h-3zM0 2h5v1h-5z" fill="#000"/></svg></div><div class="sp" style="left:49px;top:9px;height:8px"><svg width="5" height="3" viewBox="0 0 5 3" shape-rendering="crispEdges" style="position:absolute;left:3px;top:2px"><path d="M0 0h5v1h-5zM1 1h3v1h-3zM2 2h1v1h-1z" fill="#000"/></svg></div></div>
<div class="t " style="top:625px;left:951px;">20,0</div>
<div class="num" style="left:1025px;top:622px;width:93px;height:20px"><div class="sp" style="left:76px;top:1px;height:8px"><svg width="5" height="3" viewBox="0 0 5 3" shape-rendering="crispEdges" style="position:absolute;left:3px;top:2px"><path d="M2 0h1v1h-1zM1 1h3v1h-3zM0 2h5v1h-5z" fill="#000"/></svg></div><div class="sp" style="left:76px;top:9px;height:8px"><svg width="5" height="3" viewBox="0 0 5 3" shape-rendering="crispEdges" style="position:absolute;left:3px;top:2px"><path d="M0 0h5v1h-5zM1 1h3v1h-3zM2 2h1v1h-1z" fill="#000"/></svg></div></div>
<div class="t " style="top:625px;left:1027px;">10,0</div>
<div class="t " style="top:652px;left:360px;width:400px;text-align:right;">S5 Mode</div>
<div class="cb" style="left:769px;top:647px;width:145px;height:20px"><svg width="9" height="5" viewBox="0 0 9 5" style="position:absolute;right:4px;top:7px"><path d="M0.5 0.5 L4.5 4.5 L8.5 0.5" fill="none" stroke="#5a5a5a" stroke-width="1"/></svg></div>
<div class="t " style="top:651px;left:773px;">Disabled</div>
<div class="ck" style="left:925px;top:650px"></div>
<div class="num" style="left:949px;top:647px;width:66px;height:20px"><div class="sp" style="left:49px;top:1px;height:8px"><svg width="5" height="3" viewBox="0 0 5 3" shape-rendering="crispEdges" style="position:absolute;left:3px;top:2px"><path d="M2 0h1v1h-1zM1 1h3v1h-3zM0 2h5v1h-5z" fill="#000"/></svg></div><div class="sp" style="left:49px;top:9px;height:8px"><svg width="5" height="3" viewBox="0 0 5 3" shape-rendering="crispEdges" style="position:absolute;left:3px;top:2px"><path d="M0 0h5v1h-5zM1 1h3v1h-3zM2 2h1v1h-1z" fill="#000"/></svg></div></div>
<div class="t " style="top:650px;left:951px;">20,0</div>
<div class="num" style="left:1025px;top:647px;width:93px;height:20px"><div class="sp" style="left:76px;top:1px;height:8px"><svg width="5" height="3" viewBox="0 0 5 3" shape-rendering="crispEdges" style="position:absolute;left:3px;top:2px"><path d="M2 0h1v1h-1zM1 1h3v1h-3zM0 2h5v1h-5z" fill="#000"/></svg></div><div class="sp" style="left:76px;top:9px;height:8px"><svg width="5" height="3" viewBox="0 0 5 3" shape-rendering="crispEdges" style="position:absolute;left:3px;top:2px"><path d="M0 0h5v1h-5zM1 1h3v1h-3zM2 2h1v1h-1z" fill="#000"/></svg></div></div>
<div class="t " style="top:650px;left:1027px;">10,0</div>
<div style="position:absolute;left:2px;top:757px;width:1144px;height:3px;box-sizing:border-box;background:#f7f7f7"></div>
<div style="position:absolute;left:2px;top:760px;width:1144px;height:26px;box-sizing:border-box;background:#e2e2e2;border-radius:0 0 8px 8px"></div>
<div class="t " style="top:766px;left:11px;">Kbps</div>
<div style="position:absolute;left:44px;top:764px;width:42px;height:15px;box-sizing:border-box;background:#efefef;border:1px solid;border-color:#a0a0a0 #fff #fff #a0a0a0"></div>
<div class="t " style="top:765px;left:48px;">303,43</div>
<div class="t " style="top:766px;left:136px;">OC1</div>
<div style="position:absolute;left:168px;top:762px;width:19px;height:20px;box-sizing:border-box;background:#008000"></div>
<div class="t " style="top:766px;left:195px;">OC2</div>
<div style="position:absolute;left:227px;top:762px;width:19px;height:20px;box-sizing:border-box;background:#008000"></div>
<div class="t " style="top:766px;left:255px;">MBH</div>
<div style="position:absolute;left:289px;top:762px;width:19px;height:20px;box-sizing:border-box;background:#008000"></div>
<div class="t " style="top:766px;left:317px;">MBL</div>
<div style="position:absolute;left:349px;top:762px;width:19px;height:20px;box-sizing:border-box;background:#008000"></div>
<div class="t " style="top:766px;left:378px;">LBH</div>
<div style="position:absolute;left:408px;top:762px;width:19px;height:20px;box-sizing:border-box;background:#008000"></div>
<div class="t " style="top:766px;left:436px;">LBL</div>
<div style="position:absolute;left:465px;top:762px;width:19px;height:20px;box-sizing:border-box;background:#008000"></div>
<div class="t " style="top:766px;left:494px;">TP1</div>
<div style="position:absolute;left:523px;top:762px;width:19px;height:20px;box-sizing:border-box;background:#008000"></div>
<div class="t " style="top:766px;left:551px;">TP2</div>
<div style="position:absolute;left:581px;top:762px;width:19px;height:20px;box-sizing:border-box;background:#008000"></div>
<div class="t " style="top:766px;left:609px;">DF1</div>
<div style="position:absolute;left:639px;top:762px;width:19px;height:20px;box-sizing:border-box;background:#008000"></div>
<div class="t " style="top:766px;left:667px;">DF2</div>
<div style="position:absolute;left:697px;top:762px;width:19px;height:20px;box-sizing:border-box;background:#008000"></div>
<div class="t " style="top:766px;left:725px;">ESP</div>
<div style="position:absolute;left:756px;top:762px;width:19px;height:20px;box-sizing:border-box;background:#008000"></div>
<div class="t " style="top:766px;left:784px;">HM1</div>
<div style="position:absolute;left:817px;top:762px;width:19px;height:20px;box-sizing:border-box;background:#008000"></div>
<div class="t " style="top:766px;left:845px;">HM2</div>
<div style="position:absolute;left:878px;top:762px;width:19px;height:20px;box-sizing:border-box;background:#008000"></div>
<div class="t " style="top:766px;left:906px;">SE1</div>
<div style="position:absolute;left:936px;top:762px;width:19px;height:20px;box-sizing:border-box;background:#008000"></div>
<div class="t " style="top:766px;left:964px;">SE2</div>
<div style="position:absolute;left:995px;top:762px;width:19px;height:20px;box-sizing:border-box;background:#008000"></div>
<div class="t " style="top:766px;left:1023px;">PE1</div>
<div style="position:absolute;left:1056px;top:762px;width:19px;height:20px;box-sizing:border-box;background:#008000"></div>
<div class="t " style="top:766px;left:1084px;">PE2</div>
<div style="position:absolute;left:1117px;top:762px;width:19px;height:20px;box-sizing:border-box;background:#008000"></div>
<div style="position:absolute;left:1146px;top:0px;width:1px;height:785px;box-sizing:border-box;background:#1e1f22"></div>
<div style="position:absolute;left:0px;top:0px;width:2px;height:785px;box-sizing:border-box;background:#1e1f22"></div>
<div style="position:absolute;left:0px;top:37px;width:2px;height:10px;box-sizing:border-box;background:#d01010"></div></body></html>
